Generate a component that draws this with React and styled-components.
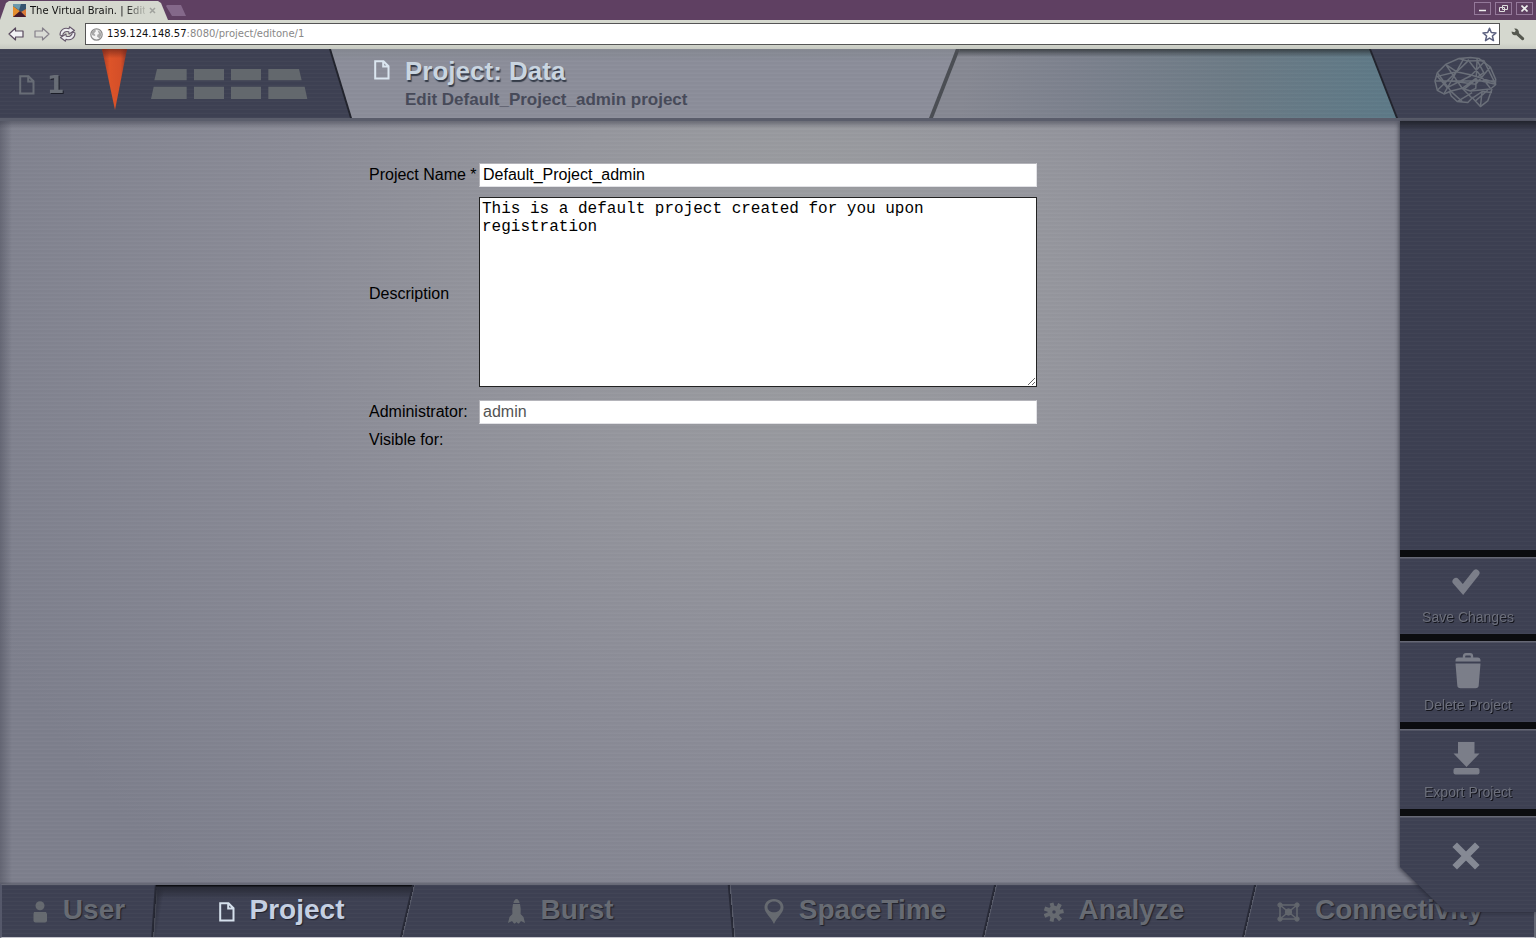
import React from "react";
import styled, { createGlobalStyle, css } from "styled-components";

const GlobalStyle = createGlobalStyle`
  *, *::before, *::after { box-sizing: border-box; }
  body {
    margin: 0;
    background: #3d4052;
    font-family: "Liberation Sans", Arial, sans-serif;
    font-size: 16px;
    color: #000;
  }
  button, input, textarea { font: inherit; color: inherit; margin: 0; }
  button { border: 0; padding: 0; background: none; cursor: pointer; }
  a { color: inherit; text-decoration: none; }
  svg { display: block; flex: none; }
`;

const scanlines = "repeating-linear-gradient(to bottom, rgba(255,255,255,0.02) 0 1px, rgba(0,0,0,0.015) 1px 3px, transparent 3px 4px)";

const Page = styled.div`
  min-height: 100vh;
  display: flex;
  flex-direction: column;
`;

/* Browser window */

const WindowBar = styled.div`
  height: 20px;
  display: flex;
  align-items: flex-end;
  justify-content: space-between;
  background: #5f4062;
  font-family: "DejaVu Sans", sans-serif;
`;

const BrowserTabs = styled.div`
  display: flex;
  align-items: flex-end;
`;

const BrowserTab = styled.div`
  width: 168px;
  height: 19px;
  padding: 0 12px 0 13px;
  display: flex;
  align-items: center;
  gap: 4px;
  background: #d5d8cf;
  clip-path: polygon(0 100%, 6px 2px, 9px 0, 158px 0, 161px 2px, 100% 100%);
  font-size: 10px;
  line-height: 18px;
`;

const TabTitle = styled.span`
  flex: 1;
  overflow: hidden;
  white-space: nowrap;
  background: linear-gradient(to right, #111 82%, #b5b8b0 100%);
  background-clip: text;
  color: transparent;
`;

const NewTab = styled.button`
  width: 20px;
  height: 11px;
  margin: 0 0 4px -2px;
  background: #84688a;
  clip-path: polygon(0 1px, 1px 0, 15px 0, 100% 100%, 6px 100%);
`;

const WindowButtons = styled.div`
  display: flex;
  gap: 4px;
  padding: 0 3px 5px 0;
`;

const WindowButton = styled.button`
  width: 17px;
  height: 13px;
  border: 1px solid #94799a;
  display: grid;
  place-items: center;
`;

const AddressBar = styled.div`
  height: 29px;
  padding: 3px 10px 4px 7px;
  display: flex;
  align-items: center;
  gap: 9px;
  background: linear-gradient(#d5d8cf 80%, #c6c9c1);
`;

const ToolButton = styled.button`
  width: 17px;
  height: 17px;
  display: grid;
  place-items: center;
`;

const UrlBox = styled.div`
  flex: 1;
  height: 22px;
  padding: 0 2px 0 4px;
  display: flex;
  align-items: center;
  gap: 4px;
  background: #fff;
  border: 1px solid #555;
  font: 10px/20px "DejaVu Sans", sans-serif;
  color: #888;
`;

const UrlText = styled.span`
  flex: 1;
  b { font-weight: normal; color: #111; }
`;

/* Application header */

const Header = styled.header`
  height: 72px;
  display: flex;
  background: ${scanlines}, linear-gradient(#868992, #8c8e9a 12px);
  border-bottom: 3px solid #5a5d6b;
`;

const EdgeShadow = styled.div`
  flex: none;
  display: flex;
  filter: drop-shadow(${(p) => p.$side} 0 0 ${(p) => p.$color || "#22242d"});
  ${(p) => p.$overlap && css`margin-left: -${p.$overlap}px; z-index: 1;`}
`;

const ProjectCorner = styled.div`
  width: 350px;
  padding-left: 19px;
  display: flex;
  background: ${scanlines}, #3e4153;
  clip-path: polygon(0 0, calc(100% - 21px) 0, 100% 100%, 0 100%);
`;

const ProjectCount = styled.div`
  width: 83px;
  padding-top: 2px;
  display: flex;
  align-items: center;
  gap: 12px;
  font: bold 25px/30px "DejaVu Sans", sans-serif;
  color: #686d76;
  text-shadow: 1px 1px 0 #1c1e28;
`;

const MenuGrid = styled.button`
  margin-left: 24px;
  align-self: center;
`;

const TitleArea = styled.div`
  flex: 1;
  min-width: 0;
  padding: 6px 0 0 24px;
  display: flex;
  gap: 15px;
`;

const Titles = styled.div`
  display: flex;
  flex-direction: column;
`;

const IconTop = styled.span`
  padding-top: 5px;
`;

const Title = styled.h1`
  margin: 0;
  font-size: 26px;
  line-height: 32px;
  color: #c9d5e0;
  text-shadow: 1px 2px 1px #343b48;
`;

const Subtitle = styled.h2`
  margin: 0;
  font-size: 17px;
  line-height: 26px;
  color: #474a59;
`;

const TealPanel = styled.div`
  width: 465px;
  background:
    linear-gradient(rgba(40, 45, 48, 0.75), transparent 8px),
    ${scanlines},
    linear-gradient(100deg, #878993 8%, #7d828e 30%, #6c7b86 65%, #5d7a88);
  clip-path: polygon(27px 0, 100% 0, 100% 100%, 0 100%);
`;

const BrainCorner = styled.div`
  width: 165px;
  padding: 7px 39px 0 0;
  display: flex;
  justify-content: flex-end;
  background: ${scanlines}, #3e4153;
  clip-path: polygon(0 0, 100% 0, 100% 100%, 27px 100%);
`;

/* Body */

const Body = styled.div`
  flex: 1;
  display: flex;
  background:
    linear-gradient(to bottom, rgba(60, 62, 76, 0.5), transparent 7px),
    linear-gradient(to right, rgba(60, 62, 76, 0.4), transparent 12px),
    ${scanlines},
    radial-gradient(ellipse 900px 820px at 52% 20%, #9d9fa1, #96979e 28%, #8b8c97 58%, #7e808d);
`;

const Main = styled.main`
  flex: 1;
  min-width: 0;
  padding: 42px 20px 40px 26px;
`;

const Form = styled.form`
  width: 668px;
  max-width: 100%;
  margin: 0 auto;
  display: grid;
  grid-template-columns: 110px 1fr;
  grid-template-rows: 24px 213px 24px 32px;
  align-items: center;
`;

const Label = styled.label`
  line-height: 20px;
  white-space: nowrap;
`;

const TextInput = styled.input`
  width: 100%;
  height: 24px;
  padding: 0 3px;
  border: 1px solid;
  border-color: #b4b4ba #e2e2e6 #e2e2e6 #b4b4ba;
  background: #fff;
  line-height: 20px;
  &:disabled { color: #545454; }
`;

const TextBox = styled.textarea`
  width: 100%;
  height: 190px;
  margin-bottom: 4px;
  padding: 2px;
  border: 1px solid #222;
  background: #fff;
  font: 16px/18px "Liberation Mono", monospace;
  display: block;
  resize: both;
  outline: 0;
`;

const SideBar = styled.aside`
  width: 136px;
  margin-bottom: -28px;
  position: relative;
  z-index: 2;
  display: flex;
  flex-direction: column;
  justify-content: flex-end;
  filter: drop-shadow(-1px 1px 2px rgba(30, 32, 44, 0.65));
`;

const SideFill = styled.div`
  flex: 1;
  background: linear-gradient(#22242d, transparent 10px), ${scanlines}, #3d4052;
`;

const SideButton = styled.button`
  height: ${(p) => p.$height}px;
  padding-top: ${(p) => p.$top}px;
  display: flex;
  flex-direction: column;
  align-items: center;
  gap: ${(p) => p.$gap || 0}px;
  border-top: 7px solid #0b0c0f;
  background: linear-gradient(#666875 0 1px, transparent 2px), ${scanlines}, #3e4153;
  font-size: 14px;
  line-height: 18px;
  color: #6c6f7b;
  text-shadow: 1px 1px 0 #14151c;
  svg { margin-right: ${(p) => p.$nudge || 4}px; }
`;

const CloseButton = styled(SideButton)`
  clip-path: polygon(0 0, 100% 0, 100% 100%, 46px 100%, 0 58px);
`;

/* Bottom navigation */

const Nav = styled.nav`
  height: 54px;
  display: flex;
  background: ${scanlines}, #3e4153;
  border: solid;
  border-width: 1px 2px;
  border-color: #686a77 #666976 #c4c4cc #55586a;
  box-shadow: 0 -1px 2px rgba(75, 77, 90, 0.6);
`;

const NavTab = styled.a`
  flex: ${(p) => p.$grow} 1 0;
  min-width: 0;
  padding-bottom: 2px;
  position: relative;
  display: flex;
  align-items: center;
  justify-content: center;
  gap: 15px;
  font-size: 28px;
  line-height: 50px;
  font-weight: bold;
  white-space: nowrap;
  color: ${(p) => (p.$active ? "#c5d0e2" : "#676b73")};
  text-shadow: 1px 1px 1px #1f212b;

  ${(p) => !p.$last && css`
    &::after {
      content: "";
      position: absolute;
      top: 0;
      bottom: 0;
      right: -1px;
      width: 3px;
      background: linear-gradient(to right, #282a37 0 2px, #5a5d6b 2px);
      transform: skewX(${p.$slant}deg);
    }
  `}

  ${(p) => p.$active && css`
    &::before {
      content: "";
      position: absolute;
      inset: 0 -7px 0 -3px;
      background: linear-gradient(#0d0e13 0 1px, #292b37 2px, transparent 14px),
        linear-gradient(100deg, #22242e, transparent 5%);
      clip-path: polygon(4px 0, 100% 0, calc(100% - 12px) 100%, 0 100%);
    }
  `}

  svg, span { position: relative; z-index: 1; }
  svg { margin-top: 3px; }
  span { margin-right: ${(p) => p.$inset || 0}px; }
`;

/* Drawings */

const DocIcon = ({ color }) => (
  <svg width="16" height="20" viewBox="0 0 16 20" fill="none" stroke={color} strokeWidth="2" aria-hidden="true">
    <path d="M1.2 1.2h8.3l5 5v12.3H1.2z M9.2 1.4v5.2h5" />
  </svg>
);

const Brain = () => (
  <svg width="63" height="52" viewBox="160 165 190 156" fill="none" stroke="#6a6f79" strokeWidth="4.500" strokeLinejoin="round" role="img" aria-label="Brain">
    <path d="M163 240L170 215L195 190L235 172L270 169L295 172L330 198L346 235L345 252L330 264L270 270L245 262L212 270L190 279L170 268Z" />
    <path d="M206 270L212 285L230 302L262 305L278 288M245 262L275 292M212 272L245 302M230 302L275 275" />
    <path d="M275 290L300 317L322 300L335 264M278 290L305 272L335 275M285 300L322 268M300 317L305 272" />
    <path d="M195 190L228 212L272 222L345 245M235 172L262 180L310 178M262 180L170 268M290 172L286 262L270 270M262 175L330 262M250 172L212 240L190 279M195 190L245 262L310 215L290 178M228 212L170 226L200 260L270 225L312 182M165 240L345 240M330 198L286 250L212 240M310 178L346 250L286 236L250 265M170 215L212 272" />
  </svg>
);

const Wedge = () => (
  <svg width="25" height="61" viewBox="0 0 25 61" aria-hidden="true">
    <defs>
      <linearGradient id="wedge" x2="1" y2="0">
        <stop offset="0" stopColor="#a63a25" />
        <stop offset="0.3" stopColor="#dd5429" />
        <stop offset="0.75" stopColor="#d44f28" />
        <stop offset="1" stopColor="#8e3527" />
      </linearGradient>
      <linearGradient id="wedgeTop" x2="0" y2="1">
        <stop offset="0" stopColor="#6c2519" stopOpacity="0.7" />
        <stop offset="0.15" stopColor="#6c2519" stopOpacity="0" />
      </linearGradient>
    </defs>
    <path d="M0 0H25L13 61Z" fill="url(#wedge)" />
    <path d="M0 0H25L13 61Z" fill="url(#wedgeTop)" />
  </svg>
);

const GridIcon = () => (
  <svg width="157" height="30" viewBox="453 207 471 90" fill="#63686d" aria-hidden="true">
    <path d="M471 207H560V241H463ZM582 207H672V241H582ZM693 207H783V241H693ZM805 207H897L905 241H805ZM461 260H560V297H453ZM582 260H672V297H582ZM693 260H783V297H693ZM805 260H914L922 297H805Z" />
  </svg>
);

const Favicon = () => (
  <svg width="13" height="13" viewBox="0 0 13 13" aria-hidden="true">
    <path d="M0 0H13V13H0z" fill="#35536f" />
    <path d="M0 2L8 8L0 13z" fill="#e58d2c" />
    <path d="M0 0H8L6 6L0 2z" fill="#6b98ad" />
    <path d="M8 8L13 13V5z" fill="#dc7a38" />
    <path d="M0 13L7 7L13 13z" fill="#44182c" />
  </svg>
);

const ArrowIcon = ({ flip }) => (
  <svg width="16" height="14" viewBox="0 0 16 14" fill={flip ? "#d9dbd5" : "#f2f2f4"} stroke={flip ? "#85808a" : "#57485c"} strokeWidth="1.200" strokeLinejoin="round" aria-hidden="true">
    <path d={flip ? "M15 7L8.500 1V4H1V10H8.500V13Z" : "M1 7L7.500 1V4H15V10H7.500V13Z"} />
  </svg>
);

const ReloadIcon = () => (
  <svg width="17" height="16" viewBox="0 0 17 16" fill="#ececf0" stroke="#66596c" strokeWidth="1.100" strokeLinejoin="round" aria-hidden="true">
    <path d="M1 9C1 4 5 1 10 2.800L10.500 .8L15.500 4.500L10 8L9.800 5.800C7 4.800 4 6 3.500 10Z" />
    <path d="M16 7C16 12 12 15 7 13.200L6.500 15.200L1.500 11.500L7 8L7.200 10.200C10 11.200 13 10 13.500 6Z" />
  </svg>
);

const GlobeIcon = () => (
  <svg width="13" height="13" viewBox="0 0 13 13" aria-hidden="true">
    <circle cx="6.500" cy="6.500" r="5.700" fill="#f4f4f4" stroke="#8b8b8b" strokeWidth="1.200" />
    <path d="M2 3.500L5 1.500L6 3L4 5.500L5.500 7L4.500 8L2 7ZM7.500 2L10.500 4L11.500 7L9.500 10.500L7 8.500L7.500 6.500L9 6Z" fill="#a8a8a8" />
  </svg>
);

const StarIcon = () => (
  <svg width="15" height="15" viewBox="0 0 15 15" fill="#fff" stroke="#5d6280" strokeWidth="1.500" strokeLinejoin="round" aria-hidden="true">
    <path d="M7.500 1.200L9.300 5.500L14 5.900L10.400 9L11.500 13.600L7.500 11.100L3.500 13.600L4.600 9L1 5.900L5.700 5.500Z" />
  </svg>
);

const WrenchIcon = () => (
  <svg width="14" height="13" viewBox="0 0 14 13" aria-hidden="true">
    <path d="M3.200 0.600L4.800 2.800L3.600 4.300L.6 3.500C.5 6 2.600 7.800 5.200 7L10.800 12C12 13 14 11.200 12.900 9.800L8 5.200C8.200 2 6 0 3.200 .6Z" fill="#55584f" />
  </svg>
);

const CheckIcon = () => (
  <svg width="28" height="27" viewBox="0 0 28 27" fill="none" stroke="#7b7e89" strokeWidth="7" strokeLinecap="round" aria-hidden="true">
    <path d="M4 12.500L11 20.500L24 4" />
  </svg>
);

const TrashIcon = () => (
  <svg width="26" height="36" viewBox="0 0 26 36" aria-hidden="true">
    <path d="M9 5V3.500Q9 1.300 11 1.300H15Q17 1.300 17 3.500V5" fill="none" stroke="#7b7e89" strokeWidth="2.400" />
    <path d="M.5 7.500Q.5 4.500 3.500 4.500H22.500Q25.500 4.500 25.500 7.500V8.500H.5ZM.5 10.500H25.500L23.700 32.500Q23.500 35.300 20.500 35.300H5.500Q2.500 35.300 2.300 32.500Z" fill="#7b7e89" />
  </svg>
);

const ExportIcon = () => (
  <svg width="27" height="34" viewBox="0 0 27 34" fill="#7b7e89" aria-hidden="true">
    <path d="M5 1H21.500V12.500H26.500L13.500 26L.5 12.500H5Z" />
    <rect x="0.500" y="27" width="26" height="6.500" rx="2" />
  </svg>
);

const CloseIcon = () => (
  <svg width="28" height="28" viewBox="0 0 28 28" stroke="#858994" strokeWidth="6.500" aria-hidden="true">
    <path d="M2.700 2.700L25.300 25.300M25.300 2.700L2.700 25.300" />
  </svg>
);

const UserIcon = () => (
  <svg width="16" height="22" viewBox="0 0 16 22" fill="#666a70" aria-hidden="true">
    <circle cx="8" cy="4.800" r="4.500" />
    <path d="M2 11H14L15 13V19.500Q15 21.500 13 21.500H3.500Q1.500 21.500 1.500 19.500V13Z" />
  </svg>
);

const RocketIcon = () => (
  <svg width="17" height="25" viewBox="0 0 17 25" fill="#666a70" aria-hidden="true">
    <path d="M8.500 0Q10.800 .3 11.600 4H5.400Q6.200 .3 8.500 0ZM5 5H12Q13 9 12.600 15L15.500 18L17 24L13 22L11 24.500H10L8.500 23L7 24.500H6L4 22L0 24L1.500 18L4.400 15Q4 9 5 5Z" />
  </svg>
);

const PinIcon = () => (
  <svg width="20" height="25" viewBox="0 0 20 25" fill="#666a70" fillRule="evenodd" aria-hidden="true">
    <path d="M10 0C4 0 .5 4 .5 8.500C.5 14 7 18 10 25C13 18 19.500 14 19.500 8.500C19.500 4 16 0 10 0ZM10 2.500C14 2.500 16.500 5 16.500 8C16.500 11.300 13.500 13.300 10 13.300C6.500 13.300 3.500 11.300 3.500 8C3.500 5 6 2.500 10 2.500Z" />
  </svg>
);

const GearIcon = () => (
  <svg width="20" height="20" viewBox="-10 -10 20 20" fill="none" stroke="#666a70" aria-hidden="true">
    <circle r="4" strokeWidth="4.500" />
    <path strokeWidth="4" d="M-1-4L-2.500-9M3.500-3L6-8M5 0L9.500-1M3 4L6.500 8M-1.500 5L-2.500 9.500M-5 2L-9.500 4M-5-2L-9.500-3.500" />
  </svg>
);

const NetworkIcon = () => (
  <svg width="23" height="20" viewBox="0 0 23 20" fill="#62666d" stroke="#62666d" aria-hidden="true">
    <path d="M3 3H20M3 17H20M3 3V17M20 3V17M3 3L20 17M20 3L3 17" fill="none" strokeWidth="1.600" />
    <circle cx="3" cy="3" r="2.200" />
    <circle cx="20" cy="3" r="2.200" />
    <circle cx="3" cy="17" r="2.200" />
    <circle cx="20" cy="17" r="2.200" />
    <circle cx="11.500" cy="10" r="3.200" />
  </svg>
);

const navItems = [
  { label: "User", icon: <UserIcon />, grow: 153, slant: -4 },
  { label: "Project", icon: <DocIcon color="#d5e0ec" />, grow: 253, slant: -13, active: true },
  { label: "Burst", icon: <RocketIcon />, grow: 324, slant: 5, inset: 18 },
  { label: "SpaceTime", icon: <PinIcon />, grow: 258, slant: -13, inset: 12 },
  { label: "Analyze", icon: <GearIcon />, grow: 260, slant: -13, inset: 12 },
  { label: "Connectivity", icon: <NetworkIcon />, grow: 284, inset: 24, last: true },
];

export default function App() {
  return (
    <Page>
      <GlobalStyle />
      <WindowBar>
        <BrowserTabs>
          <BrowserTab>
            <Favicon />
            <TabTitle>The Virtual Brain. | Edit</TabTitle>
            <svg width="7" height="7" viewBox="0 0 7 7" stroke="#a0a29d" strokeWidth="1.500" aria-hidden="true">
              <path d="M1 1L6 6M6 1L1 6" />
            </svg>
          </BrowserTab>
          <NewTab aria-label="New tab" />
        </BrowserTabs>
        <WindowButtons>
          <WindowButton aria-label="Minimize">
            <svg width="9" height="7" viewBox="0 0 9 7" stroke="#eee" strokeWidth="1.500"><path d="M1 5.500H8" /></svg>
          </WindowButton>
          <WindowButton aria-label="Restore">
            <svg width="9" height="7" viewBox="0 0 9 7" stroke="#ddd" fill="none"><path d="M3.500 .5H8.500V4.500H3.500ZM.5 2.500H5.500V6.500H.5Z" /></svg>
          </WindowButton>
          <WindowButton aria-label="Close window">
            <svg width="7" height="7" viewBox="0 0 7 7" stroke="#eee" strokeWidth="1.600"><path d="M.5 .5L6.500 6.500M6.500 .5L.5 6.500" /></svg>
          </WindowButton>
        </WindowButtons>
      </WindowBar>
      <AddressBar>
        <ToolButton aria-label="Back"><ArrowIcon /></ToolButton>
        <ToolButton aria-label="Forward"><ArrowIcon flip /></ToolButton>
        <ToolButton aria-label="Reload"><ReloadIcon /></ToolButton>
        <UrlBox>
          <GlobeIcon />
          <UrlText><b>139.124.148.57</b>:8080/project/editone/1</UrlText>
          <StarIcon />
        </UrlBox>
        <ToolButton aria-label="Settings"><WrenchIcon /></ToolButton>
      </AddressBar>

      <Header>
        <EdgeShadow $side="2px">
          <ProjectCorner>
            <ProjectCount><DocIcon color="#686d76" />1</ProjectCount>
            <Wedge />
            <MenuGrid aria-label="Menu"><GridIcon /></MenuGrid>
          </ProjectCorner>
        </EdgeShadow>
        <TitleArea>
          <IconTop><DocIcon color="#dbe6f0" /></IconTop>
          <Titles>
            <Title>Project: Data</Title>
            <Subtitle>Edit Default_Project_admin project</Subtitle>
          </Titles>
        </TitleArea>
        <EdgeShadow $side="-4px" $color="#4b4e54">
          <TealPanel />
        </EdgeShadow>
        <EdgeShadow $side="-2px" $overlap={27}>
          <BrainCorner><Brain /></BrainCorner>
        </EdgeShadow>
      </Header>

      <Body>
        <Main>
          <Form>
            <Label htmlFor="name">Project Name *</Label>
            <TextInput id="name" defaultValue="Default_Project_admin" />
            <Label htmlFor="description">Description</Label>
            <TextBox id="description" defaultValue="This is a default project created for you upon registration" />
            <Label htmlFor="administrator">Administrator:</Label>
            <TextInput id="administrator" defaultValue="admin" disabled />
            <Label as="span">Visible for:</Label>
          </Form>
        </Main>
        <SideBar>
          <SideFill />
          <SideButton $height={84} $top={12} $gap={12}><CheckIcon />Save Changes</SideButton>
          <SideButton $height={88} $top={12} $gap={7} $nudge={1}><TrashIcon />Delete Project</SideButton>
          <SideButton $height={87} $top={12} $gap={8}><ExportIcon />Export Project</SideButton>
          <CloseButton $height={103} $top={26} aria-label="Close"><CloseIcon /></CloseButton>
        </SideBar>
      </Body>

      <Nav>
        {navItems.map((item) => (
          <NavTab
            key={item.label}
            href={`#${item.label.toLowerCase()}`}
            $grow={item.grow}
            $slant={item.slant}
            $inset={item.inset}
            $active={item.active}
            $last={item.last}
          >
            {item.icon}
            <span>{item.label}</span>
          </NavTab>
        ))}
      </Nav>
    </Page>
  );
}
